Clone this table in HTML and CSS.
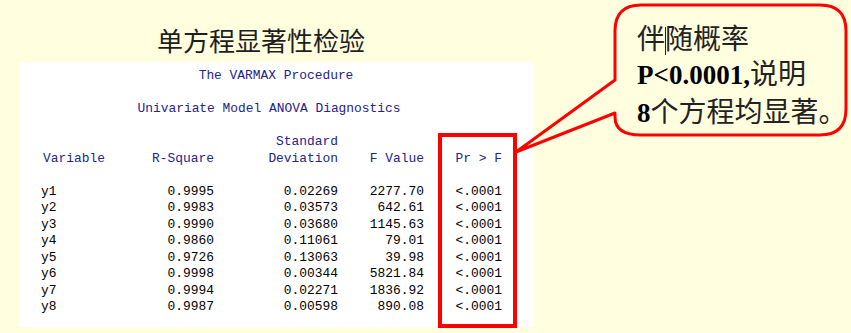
FILE: index.html
```html
<!DOCTYPE html>
<html lang="zh">
<head>
<meta charset="utf-8">
<title>单方程显著性检验</title>
<link rel="stylesheet" href="styles.css">
</head>
<body>
<div class="slide">
  <div class="title">单方程显著性检验</div>
  <div class="panel">
    <div class="ptitle">The VARMAX Procedure</div>
    <div class="ptitle sub">Univariate Model ANOVA Diagnostics</div>
    <div class="grid">
      <div class="hd left">Variable</div>
      <div class="hd">R-Square</div>
      <div class="hd">Standard<br>Deviation</div>
      <div class="hd">F Value</div>
      <div class="hd">Pr &gt; F</div>

      <div class="left">y1</div><div>0.9995</div><div>0.02269</div><div>2277.70</div><div>&lt;.0001</div>
      <div class="left">y2</div><div>0.9983</div><div>0.03573</div><div>642.61</div><div>&lt;.0001</div>
      <div class="left">y3</div><div>0.9990</div><div>0.03680</div><div>1145.63</div><div>&lt;.0001</div>
      <div class="left">y4</div><div>0.9860</div><div>0.11061</div><div>79.01</div><div>&lt;.0001</div>
      <div class="left">y5</div><div>0.9726</div><div>0.13063</div><div>39.98</div><div>&lt;.0001</div>
      <div class="left">y6</div><div>0.9998</div><div>0.00344</div><div>5821.84</div><div>&lt;.0001</div>
      <div class="left">y7</div><div>0.9994</div><div>0.02271</div><div>1836.92</div><div>&lt;.0001</div>
      <div class="left">y8</div><div>0.9987</div><div>0.00598</div><div>890.08</div><div>&lt;.0001</div>
    </div>
  </div>

  <div class="highlight"></div>

  <svg class="bubble" width="851" height="333" viewBox="0 0 851 333">
    <path d="M 641 5 H 820 Q 846 5 846 31 V 109 Q 846 135 820 135 H 641 Q 615 135 615 117 V 113 L 516 152 L 615 80 V 31 Q 615 5 641 5 Z"
          fill="#ffffe0" stroke="#ff0000" stroke-width="3" stroke-linejoin="round"/>
  </svg>
  <div class="note">
    <div class="nline">伴<span class="caret"></span>随概率</div>
    <div class="nline"><b>P&lt;0.0001,</b>说明</div>
    <div class="nline"><b>8</b>个方程均显著。</div>
  </div>
</div>
</body>
</html>
```

FILE: styles.css
```css
html, body {
  margin: 0;
  padding: 0;
  background: #ffffe0;
}

.slide {
  position: relative;
  width: 851px;
  height: 333px;
  box-sizing: border-box;
  padding: 25px 0 0 19px;
  overflow: hidden;
  background: #ffffe0;
}

.title {
  margin-left: 138px;
  font-family: "Noto Sans CJK SC", sans-serif;
  font-size: 26px;
  line-height: 30px;
  height: 30px;
  color: #1e1e1e;
}

.panel {
  margin-top: 7px;
  width: 514px;
  height: 265px;
  box-sizing: border-box;
  padding-top: 6px;
  background: #ffffff;
  font-family: "Liberation Mono", monospace;
  font-size: 12.9px;
  line-height: 16.5px;
  color: #000;
}

.ptitle {
  text-align: center;
  color: #23238c;
  margin-bottom: 16.5px;
}

.ptitle.sub {
  padding-right: 14px;
}

.grid {
  display: grid;
  grid-template-columns: 82px 91px 124px 86px 78px;
  padding-left: 22px;
  text-align: right;
  white-space: pre;
}

.grid .left {
  text-align: left;
}

.grid .hd {
  align-self: end;
  color: #23238c;
  margin-bottom: 16.5px;
}

.grid .hd.left {
  padding-left: 2px;
}

.highlight {
  position: absolute;
  left: 438px;
  top: 133px;
  width: 79px;
  height: 195px;
  box-sizing: border-box;
  border: 4px solid #ff0000;
}

.bubble {
  position: absolute;
  left: 0;
  top: 0;
}

.note {
  position: absolute;
  left: 637px;
  top: 20px;
  font-family: "Noto Sans CJK SC", sans-serif;
  font-size: 28px;
  line-height: 34.5px;
  color: #222;
  white-space: nowrap;
}

.note b {
  font-family: "Liberation Serif", serif;
  font-weight: bold;
  font-size: 27px;
  color: #000;
}

.caret {
  display: inline-block;
  width: 1px;
  height: 28px;
  margin-right: -1px;
  background: #222;
  vertical-align: middle;
}
```
